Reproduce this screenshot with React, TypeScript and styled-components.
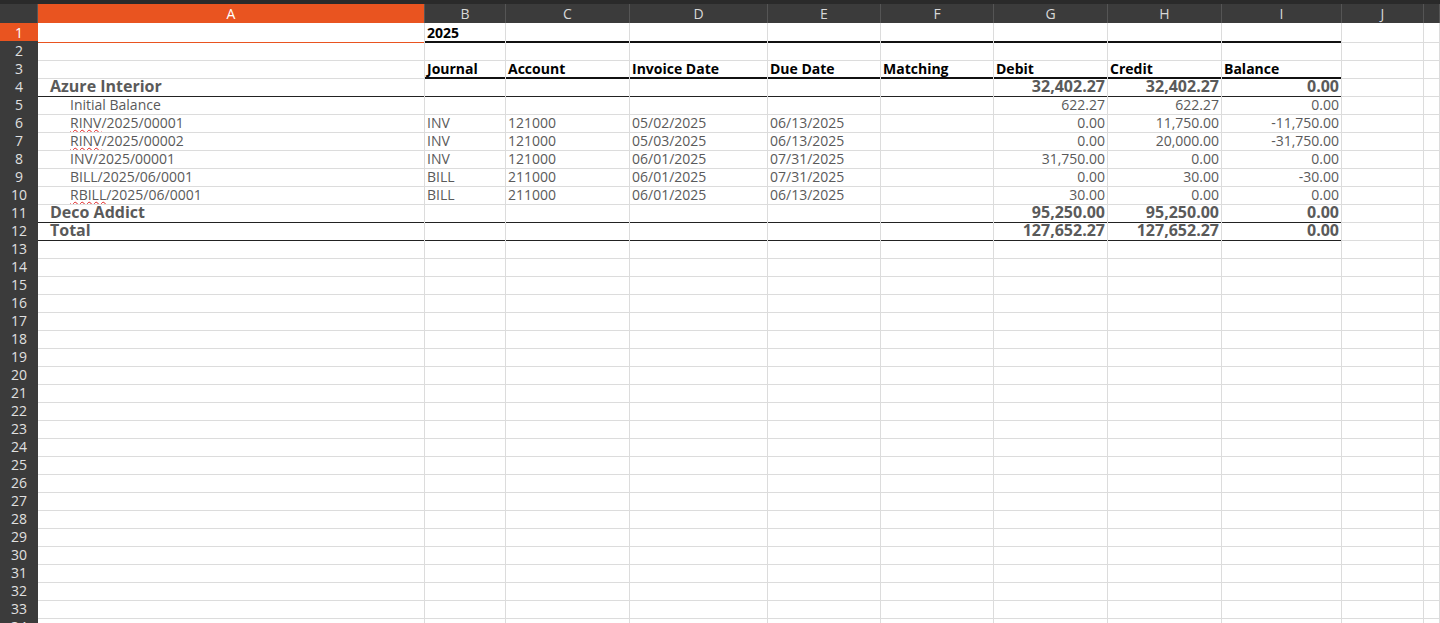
import React from 'react'
import styled, { createGlobalStyle } from 'styled-components'

const Global = createGlobalStyle`
	html, body { margin: 0; padding: 0; background: #fff; overflow: hidden; }
	body { font-family: 'Open Sans', 'Noto Sans', sans-serif; }
`

const COLS = '38px 387px 81px 124px 138px 113px 113px 114px 114px 120px 82px 1fr'
const letters = ['A', 'B', 'C', 'D', 'E', 'F', 'G', 'H', 'I', 'J', '']

const Sheet = styled.div`
	width: 1440px;
	height: 623px;
	overflow: hidden;
	background: #fff;
	border-top: 4px solid #2a2a2a;
	box-sizing: border-box;
`

const Row = styled.div<{ $h?: number }>`
	display: grid;
	grid-template-columns: ${COLS};
	height: ${(p) => p.$h ?? 18}px;
`

const ColHead = styled.div<{ $active?: boolean }>`
	background: ${(p) => (p.$active ? '#e95420' : '#3b3b3b')};
	color: ${(p) => (p.$active ? '#fff' : '#d8d8d8')};
	border-right: 1px solid #555;
	font-size: 14px;
	display: flex;
	align-items: center;
	justify-content: center;
`

const RowHead = styled.div<{ $active?: boolean }>`
	background: ${(p) => (p.$active ? '#e95420' : '#3b3b3b')};
	color: ${(p) => (p.$active ? '#fff' : '#e0e0e0')};
	border-bottom: 1px solid #555;
	font-size: 14px;
	display: flex;
	align-items: center;
	justify-content: center;
`

type Line = 'none' | 'thin' | 'thick' | 'sel'

const Cell = styled.div<{ $bold?: boolean; $right?: boolean; $head?: boolean; $indent?: number; $line?: Line }>`
	box-sizing: border-box;
	border-right: 1px solid #dcdcdc;
	border-bottom: ${(p) =>
		p.$line === 'thick' ? '2px solid #111' : p.$line === 'thin' ? '1px solid #222' : p.$line === 'sel' ? '1px solid #e95420' : '1px solid #dcdcdc'};
	line-height: 17px;
	padding: 0 2px 0 ${(p) => (p.$indent ?? 0) + 2}px;
	color: ${(p) => (p.$head ? '#000' : '#5a5a5a')};
	font-weight: ${(p) => (p.$bold || p.$head ? 700 : 400)};
	font-size: ${(p) => (p.$bold && !p.$head ? 16 : 14)}px;
	white-space: nowrap;
	overflow: hidden;
	display: flex;
	align-items: ${(p) => (p.$head ? 'flex-end' : 'center')};
	justify-content: ${(p) => (p.$right ? 'flex-end' : 'flex-start')};
`

const Squiggle = styled.span`
	text-decoration-line: underline;
	text-decoration-style: wavy;
	text-decoration-color: #e02020;
	text-decoration-thickness: 1px;
	text-underline-offset: 1px;
`

type Spec = { v?: React.ReactNode; bold?: boolean; right?: boolean; head?: boolean; indent?: number }

const sq = (a: string, b: string) => (
	<span>
		<Squiggle>{a}</Squiggle>
		{b}
	</span>
)

const rows: { cells: Spec[]; line?: Line; lineA?: boolean }[] = [
	{ cells: [{}, { v: '2025', head: true }], line: 'thick' },
	{ cells: [] },
	{
		cells: [{}, ...['Journal', 'Account', 'Invoice Date', 'Due Date', 'Matching', 'Debit', 'Credit', 'Balance'].map((v) => ({ v, head: true }))],
		line: 'thick',
	},
	{
		cells: [{ v: 'Azure Interior', bold: true, indent: 10 }, {}, {}, {}, {}, {}, { v: '32,402.27', bold: true, right: true }, { v: '32,402.27', bold: true, right: true }, { v: '0.00', bold: true, right: true }],
		line: 'thin',
		lineA: true,
	},
	{ cells: [{ v: 'Initial Balance', indent: 30 }, {}, {}, {}, {}, {}, { v: '622.27', right: true }, { v: '622.27', right: true }, { v: '0.00', right: true }] },
	{ cells: [{ v: sq('RINV', '/2025/00001'), indent: 30 }, { v: 'INV' }, { v: '121000' }, { v: '05/02/2025' }, { v: '06/13/2025' }, {}, { v: '0.00', right: true }, { v: '11,750.00', right: true }, { v: '-11,750.00', right: true }] },
	{ cells: [{ v: sq('RINV', '/2025/00002'), indent: 30 }, { v: 'INV' }, { v: '121000' }, { v: '05/03/2025' }, { v: '06/13/2025' }, {}, { v: '0.00', right: true }, { v: '20,000.00', right: true }, { v: '-31,750.00', right: true }] },
	{ cells: [{ v: 'INV/2025/00001', indent: 30 }, { v: 'INV' }, { v: '121000' }, { v: '06/01/2025' }, { v: '07/31/2025' }, {}, { v: '31,750.00', right: true }, { v: '0.00', right: true }, { v: '0.00', right: true }] },
	{ cells: [{ v: 'BILL/2025/06/0001', indent: 30 }, { v: 'BILL' }, { v: '211000' }, { v: '06/01/2025' }, { v: '07/31/2025' }, {}, { v: '0.00', right: true }, { v: '30.00', right: true }, { v: '-30.00', right: true }] },
	{ cells: [{ v: sq('RBILL', '/2025/06/0001'), indent: 30 }, { v: 'BILL' }, { v: '211000' }, { v: '06/01/2025' }, { v: '06/13/2025' }, {}, { v: '30.00', right: true }, { v: '0.00', right: true }, { v: '0.00', right: true }] },
	{
		cells: [{ v: 'Deco Addict', bold: true, indent: 10 }, {}, {}, {}, {}, {}, { v: '95,250.00', bold: true, right: true }, { v: '95,250.00', bold: true, right: true }, { v: '0.00', bold: true, right: true }],
		line: 'thin',
		lineA: true,
	},
	{
		cells: [{ v: 'Total', bold: true, indent: 10 }, {}, {}, {}, {}, {}, { v: '127,652.27', bold: true, right: true }, { v: '127,652.27', bold: true, right: true }, { v: '0.00', bold: true, right: true }],
		line: 'thin',
		lineA: true,
	},
]

export default function App() {
	const all = Array.from({ length: 34 }, (_, i) => rows[i] ?? { cells: [] })
	return (
		<>
			<Global />
			<Sheet>
				<Row $h={19}>
					<ColHead />
					{letters.map((l, i) => (
						<ColHead key={i} $active={i === 0}>
							{l}
						</ColHead>
					))}
				</Row>
				{all.map((r, ri) => (
					<Row key={ri}>
						<RowHead $active={ri === 0}>{ri + 1}</RowHead>
						{Array.from({ length: 11 }, (_, ci) => {
							const s = r.cells[ci] ?? {}
							let line: Line = 'none'
							if (ri === 0 && ci === 0) line = 'sel'
							else if (r.line && ci <= 8 && (ci > 0 || r.lineA)) line = r.line
							return (
								<Cell key={ci} $bold={s.bold} $right={s.right} $head={s.head} $indent={s.indent} $line={line}>
									{s.v}
								</Cell>
							)
						})}
					</Row>
				))}
			</Sheet>
		</>
	)
}
